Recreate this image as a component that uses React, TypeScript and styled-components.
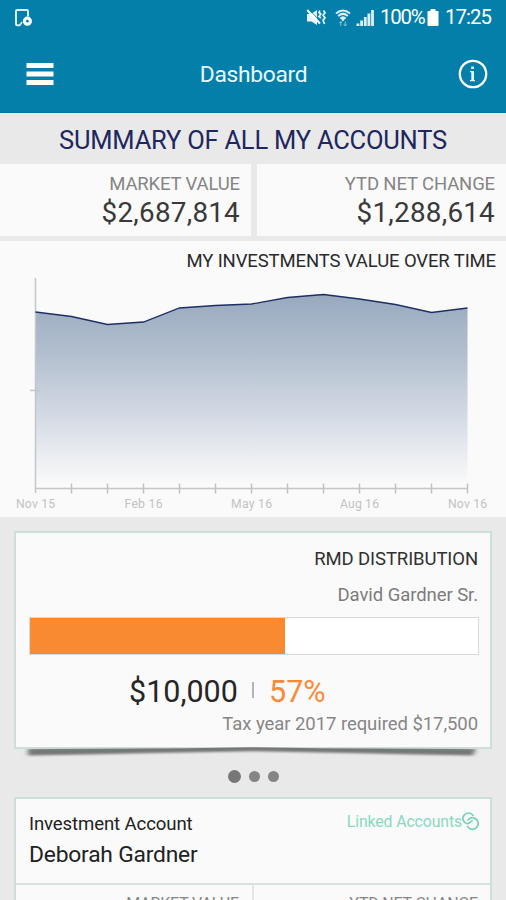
import React from "react";
import styled, { createGlobalStyle } from "styled-components";

const GlobalStyle = createGlobalStyle`
  * { box-sizing: border-box; }
  body { margin: 0; background: #e9e9e9; font-family: Roboto, "Liberation Sans", sans-serif; }
`;

const Screen = styled.div`
  width: 506px;
  height: 900px;
  overflow: hidden;
  display: flex;
  flex-direction: column;
  background: #e9e9e9;
`;

const Label = styled.span<{ $size: number; $color?: string; $line?: number; $track?: number }>`
  display: block;
  flex: none;
  font-size: ${(p) => p.$size}px;
  line-height: ${(p) => p.$line ?? 24}px;
  font-weight: 400;
  letter-spacing: ${(p) => p.$track ?? 0}px;
  color: ${(p) => p.$color ?? "#393939"};
  white-space: nowrap;
`;

const Header = styled.header`
  flex: none;
  height: 113px;
  background: #047fa9;
  border-bottom: 1px solid #0575a0;
  color: #fff;
`;

const StatusBar = styled.div`
  height: 35px;
  padding: 0 14px 0 14px;
  display: flex;
  justify-content: space-between;
  align-items: center;
`;

const StatusGroup = styled.div`
  display: flex;
  align-items: center;
`;

const StatusText = styled.span<{ $w: number; $track: number }>`
  display: block;
  width: ${(p) => p.$w}px;
  font-size: 20.4px;
  line-height: 37px;
  letter-spacing: ${(p) => p.$track}px;
  white-space: nowrap;
`;

const StatusSlot = styled.span<{ $gap: number }>`
  display: flex;
  margin-right: ${(p) => p.$gap}px;
`;

const NavBar = styled.nav`
  height: 77px;
  display: grid;
  grid-template-columns: 40px 1fr 40px;
  align-items: center;
  padding: 0 18px 0 20px;
`;

const Title = styled.h1`
  margin: 2px 0 0 -1px;
  font-size: 22.8px;
  font-weight: 400;
  letter-spacing: -0.3px;
  line-height: 30px;
  text-align: center;
  color: #e9f7ff;
`;

const NavButton = styled.button<{ $end?: boolean }>`
  display: flex;
  justify-content: ${(p) => (p.$end ? "flex-end" : "center")};
  padding: 0;
  border: 0;
  background: none;
`;

const SummaryTitle = styled.h2`
  flex: none;
  margin: 0;
  height: 51px;
  padding-top: 2px;
  display: flex;
  align-items: center;
  justify-content: center;
`;

const Totals = styled.section`
  flex: none;
  display: grid;
  grid-template-columns: 251px 1fr;
  column-gap: 6px;
  height: 72px;
`;

const Total = styled.div`
  display: flex;
  flex-direction: column;
  align-items: flex-end;
  padding: 8px 11px 0 0;
  background: #fafafa;
`;

const ChartPanel = styled.section`
  flex: none;
  margin-top: 5px;
  height: 276px;
  background: #fafafa;
`;

const ChartHeading = styled.div`
  display: flex;
  justify-content: flex-end;
  height: 29px;
  padding: 8px 10px 0 0;
`;

const ChartSvg = styled.svg`
  display: block;
  width: 506px;
  height: 247px;
  font-size: 12.2px;
`;

const CardFrame = styled.section<{ $height: number }>`
  position: relative;
  flex: none;
  margin: 14px 14px 0;
  height: ${(p) => p.$height}px;
  border: 2px solid #ccdfdc;
  background: #fafafa;
`;

const RmdBody = styled.div`
  display: flex;
  flex-direction: column;
  align-items: flex-end;
  padding: 14px 12px 0 13px;
`;

const Owner = styled.div`
  margin-top: 12px;
`;

const Progress = styled.div`
  width: 450px;
  height: 38px;
  margin: 10px -1px 22px 0;
  border: 1px solid #d3d9dc;
  background: #fff;
`;

const ProgressFill = styled.div`
  height: 100%;
  background: #fa8a32;
`;

const Amounts = styled.div`
  display: flex;
  align-items: center;
  align-self: flex-start;
  height: 30px;
  margin: 0 0 5px 100px;
`;

const Amount = styled.div<{ $w: number }>`
  width: ${(p) => p.$w}px;
`;

const Divider = styled.i`
  width: 2px;
  height: 16px;
  margin: 0 15px 5px 14px;
  background: #b4b4b4;
`;

const CurlShadow = styled.svg`
  position: absolute;
  left: 0;
  top: 212px;
  width: 474px;
  height: 18px;
`;

const Pager = styled.div`
  flex: none;
  height: 48px;
  display: flex;
  justify-content: center;
  align-items: center;
  gap: 8px;
  padding-top: 6px;
`;

const Dot = styled.i<{ $active?: boolean }>`
  width: ${(p) => (p.$active ? 13 : 11)}px;
  height: ${(p) => (p.$active ? 13 : 11)}px;
  border-radius: 50%;
  background: ${(p) => (p.$active ? "#777" : "#858585")};
`;

const AccountFrame = styled(CardFrame)`
  margin-top: 0;
`;

const AccountHead = styled.div`
  height: 84px;
  display: flex;
  justify-content: space-between;
  padding: 13px 11px 0 13px;
`;

const AccountTotals = styled.div`
  display: grid;
  grid-template-columns: 238px 1fr;
  border-top: 2px solid #d9e0e0;
`;

const AccountTotal = styled.div<{ $divided?: boolean }>`
  display: flex;
  justify-content: flex-end;
  height: 40px;
  padding: 7px ${(p) => (p.$divided ? 13 : 12)}px 0 0;
  border-right: ${(p) => (p.$divided ? "2px solid #e1e6e5" : "0")};
`;

const Linked = styled.div`
  display: flex;
  align-items: flex-start;
`;

const months = [35.5, 71.5, 107.5, 143.5, 179.5, 215.5, 251.5, 287.5, 323.5, 359.5, 395.5, 431.5, 467.5];
const values = [42, 46.5, 54.5, 52, 38, 35.5, 34, 27.5, 24.5, 29, 34.5, 42.5, 38];
const curve = months.map((x, i) => `${x},${values[i]}`).join(" ");
const ticks = [
  { x: 35.5, text: "Nov 15", w: 39 },
  { x: 143.5, text: "Feb 16", w: 38 },
  { x: 251.5, text: "May 16", w: 41 },
  { x: 359.5, text: "Aug 16", w: 39 },
  { x: 467.5, text: "Nov 16", w: 39 },
];

function Chart() {
  return (
    <ChartSvg viewBox="0 0 506 247">
      <defs>
        <linearGradient id="area" x1="0" y1="24" x2="0" y2="214" gradientUnits="userSpaceOnUse">
          <stop offset="0" stopColor="#98a9bf" />
          <stop offset=".3" stopColor="#b1bece" />
          <stop offset=".65" stopColor="#d5dbe5" />
          <stop offset="1" stopColor="#fafafa" />
        </linearGradient>
      </defs>
      <polygon points={`35.5,218 ${curve} 467.5,218`} fill="url(#area)" />
      <path d="M35.5 8V223M30 120.5H41" stroke="#c2c7cb" strokeWidth="1.5" fill="none" />
      <path d="M35 218.5H468" stroke="#c5c5c5" strokeWidth="1.4" />
      {months.slice(1).map((x) => (
        <path key={x} d={`M${x} 213.5V223.5`} stroke="#c2c2c2" strokeWidth="1.5" />
      ))}
      <polyline points={curve} fill="none" stroke="#1d2f63" strokeWidth="1.3" />
      {ticks.map((t) => (
        <text key={t.text} x={t.x} y="238" textAnchor="middle" textLength={t.w} fill="#c3c3c3">
          {t.text}
        </text>
      ))}
    </ChartSvg>
  );
}

const DeviceIcon = () => (
  <svg width="19" height="20" viewBox="0 0 19 20" fill="none">
    <path d="M6.5 17.2H3Q2 17.2 2 16V3.2Q2 2 3 2H13Q14 2 14 3.2V8.5" stroke="#d9f0f8" strokeWidth="2" />
    <circle cx="13.4" cy="13.2" r="3" stroke="#fff" strokeWidth="3.2" />
    <path d="M6 17L8 14" stroke="#d9f0f8" strokeWidth="1.5" />
  </svg>
);

const MuteIcon = () => (
  <svg width="20" height="20" viewBox="0 0 20 20">
    <path d="M1 6H5L11 2V17L5.5 13.5H1Z" fill="#e9f6fb" />
    <path d="M2.8 1.3L14 13" stroke="#047fa9" strokeWidth=".8" />
    <path d="M1.2 2L14 15.5" stroke="#fff" strokeWidth="2" />
    <path d="M13.8 2.5L13 4.5L14.8 6L13 8.5L15 10M17.5 2.5L19 4.8L17 7.2L19 9.8L17 12.2L18.5 16" stroke="#e9f6fb" strokeWidth="1.7" fill="none" />
  </svg>
);

const WifiIcon = () => (
  <svg width="16" height="20" viewBox="0 0 16 20" fill="none" stroke="#d9f0f7">
    <path d="M1 5.5Q8 -.5 15 5.5M3.2 8Q8 3.8 12.8 8M5.4 10.4Q8 8 10.6 10.4" strokeWidth="2" />
    <path d="M6 10H10L8 13Z" fill="#e9f6fb" />
    <path d="M5.8 18V13.5M4.3 15L5.8 13.5L7 15M10.2 13.5V18M8.8 16.3L10.2 18L11.6 16.3" stroke="#83c5da" />
  </svg>
);

const SignalIcon = () => (
  <svg width="18" height="20" viewBox="0 0 18 20" fill="#dcf1f7">
    <path d="M.5 15.5H3.4V18H.5ZM4.2 12.5H7V18H4.2ZM7.9 9H10.7V18H7.9ZM11.5 5.5H14.3V18H11.5ZM15.1 2H17.9V18H15.1Z" />
  </svg>
);

const BatteryIcon = () => (
  <svg width="12" height="20" viewBox="0 0 12 20" fill="#fff">
    <path d="M3.5 1H8.5V3H11Q11.5 3 11.5 4V17Q11.5 18 10.5 18H1.5Q.5 18 .5 17V4Q.5 3 1.5 3H3.5Z" />
  </svg>
);

const LinkIcon = () => (
  <svg width="17" height="20" viewBox="0 0 17 20" fill="none" stroke="#75d3b4" strokeWidth="1.7" strokeLinecap="round">
    <path d="M11.2 3.4C8.8 .2 4.2 .2 1.9 3.5C-.3 6.9 1.6 11.1 5.3 11.6C7.3 11.9 8.1 10 10.2 8.6" />
    <path d="M6.1 8C7.4 6.3 8.7 5.3 11 5.8C15.9 6.4 17.7 11.5 14.8 15.3C12.2 18.5 7.4 17.9 5.5 14.4" />
  </svg>
);

function Curl() {
  return (
    <CurlShadow viewBox="0 0 474 18">
      <defs>
        <filter id="soft" x="-5%" y="-80%" width="110%" height="260%">
          <feGaussianBlur stdDeviation="2.6 1.2" />
        </filter>
        <clipPath id="below"><path d="M0 4L170 3.3L237 2.3L304 3.3L474 4V18H0Z" /></clipPath>
      </defs>
      <g clipPath="url(#below)">
        <path d="M12 3.5L237 0L460 3.5L457 10.5Q340 8.2 237 6.2Q130 8.2 12 10.5Z" fill="#777" filter="url(#soft)" />
      </g>
    </CurlShadow>
  );
}

function AccountCard() {
  return (
    <AccountFrame $height={220}>
      <AccountHead>
        <div>
          <Label $size={18.6} $track={-0.12} $color="#222">Investment Account</Label>
          <Label $size={22.8} $line={37} $track={-0.2} $color="#222">Deborah Gardner</Label>
        </div>
        <Linked>
          <Label $size={15.8} $line={20} $track={-0.1} $color="#88d9bf">Linked Accounts</Label>
          <LinkIcon />
        </Linked>
      </AccountHead>
      <AccountTotals>
        <AccountTotal $divided><Label $size={16} $track={-0.15} $color="#858585">MARKET VALUE</Label></AccountTotal>
        <AccountTotal><Label $size={16} $track={-0.2} $color="#858585">YTD NET CHANGE</Label></AccountTotal>
      </AccountTotals>
    </AccountFrame>
  );
}

export default function App() {
  return (
    <Screen>
      <GlobalStyle />
      <Header>
        <StatusBar>
          <DeviceIcon />
          <StatusGroup>
            <StatusSlot $gap={9}><MuteIcon /></StatusSlot>
            <StatusSlot $gap={5}><WifiIcon /></StatusSlot>
            <StatusSlot $gap={6}><SignalIcon /></StatusSlot>
            <StatusText $w={47} $track={-1.25}>100%</StatusText>
            <StatusSlot $gap={6}><BatteryIcon /></StatusSlot>
            <StatusText $w={47} $track={-0.95}>17:25</StatusText>
          </StatusGroup>
        </StatusBar>
        <NavBar>
          <NavButton aria-label="Menu">
            <svg width="28" height="24" viewBox="0 0 28 24" fill="#fff">
              <path d="M.5 1H27.5V6H.5ZM.5 9.5H27.5V14.5H.5ZM.5 18H27.5V23H.5Z" />
            </svg>
          </NavButton>
          <Title>Dashboard</Title>
          <NavButton $end aria-label="Information">
            <svg width="30" height="30" viewBox="0 0 30 30">
              <circle cx="15" cy="15" r="13.2" fill="none" stroke="#fff" strokeWidth="2.3" />
              <path d="M13.2 7.5H15.9V10H13.2ZM12 12H16V21H17V22.3H12V21H13.3V13.3H12Z" fill="#e4f5fb" />
            </svg>
          </NavButton>
        </NavBar>
      </Header>
      <SummaryTitle>
        <Label $size={25.5} $line={34} $track={-0.22} $color="#20265e">SUMMARY OF ALL MY ACCOUNTS</Label>
      </SummaryTitle>
      <Totals>
        <Total>
          <Label $size={18.5} $track={-0.15} $color="#858585">MARKET VALUE</Label>
          <Label $size={27.8} $line={34} $track={0.25}>$2,687,814</Label>
        </Total>
        <Total>
          <Label $size={18.5} $track={-0.13} $color="#858585">YTD NET CHANGE</Label>
          <Label $size={27.8} $line={34} $track={0.25}>$1,288,614</Label>
        </Total>
      </Totals>
      <ChartPanel>
        <ChartHeading>
          <Label $size={18.5} $track={-0.12} $color="#2a2a2a">MY INVESTMENTS VALUE OVER TIME</Label>
        </ChartHeading>
        <Chart />
      </ChartPanel>
      <CardFrame $height={218}>
        <RmdBody>
          <Label $size={18.5} $track={-0.1} $color="#303030">RMD DISTRIBUTION</Label>
          <Owner><Label $size={18.5} $track={-0.07} $color="#7c7c7c">David Gardner Sr.</Label></Owner>
          <Progress>
            <ProgressFill style={{ width: "57%" }} />
          </Progress>
          <Amounts>
            <Amount $w={109}><Label $size={30.5} $line={30} $color="#262626">$10,000</Label></Amount>
            <Divider />
            <Label $size={30.5} $line={30} $color="#fa8935">57%</Label>
          </Amounts>
          <Label $size={18.5} $track={-0.06} $color="#868686">Tax year 2017 required $17,500</Label>
        </RmdBody>
        <Curl />
      </CardFrame>
      <Pager>
        <Dot $active />
        <Dot />
        <Dot />
      </Pager>
      <AccountCard />
    </Screen>
  );
}
